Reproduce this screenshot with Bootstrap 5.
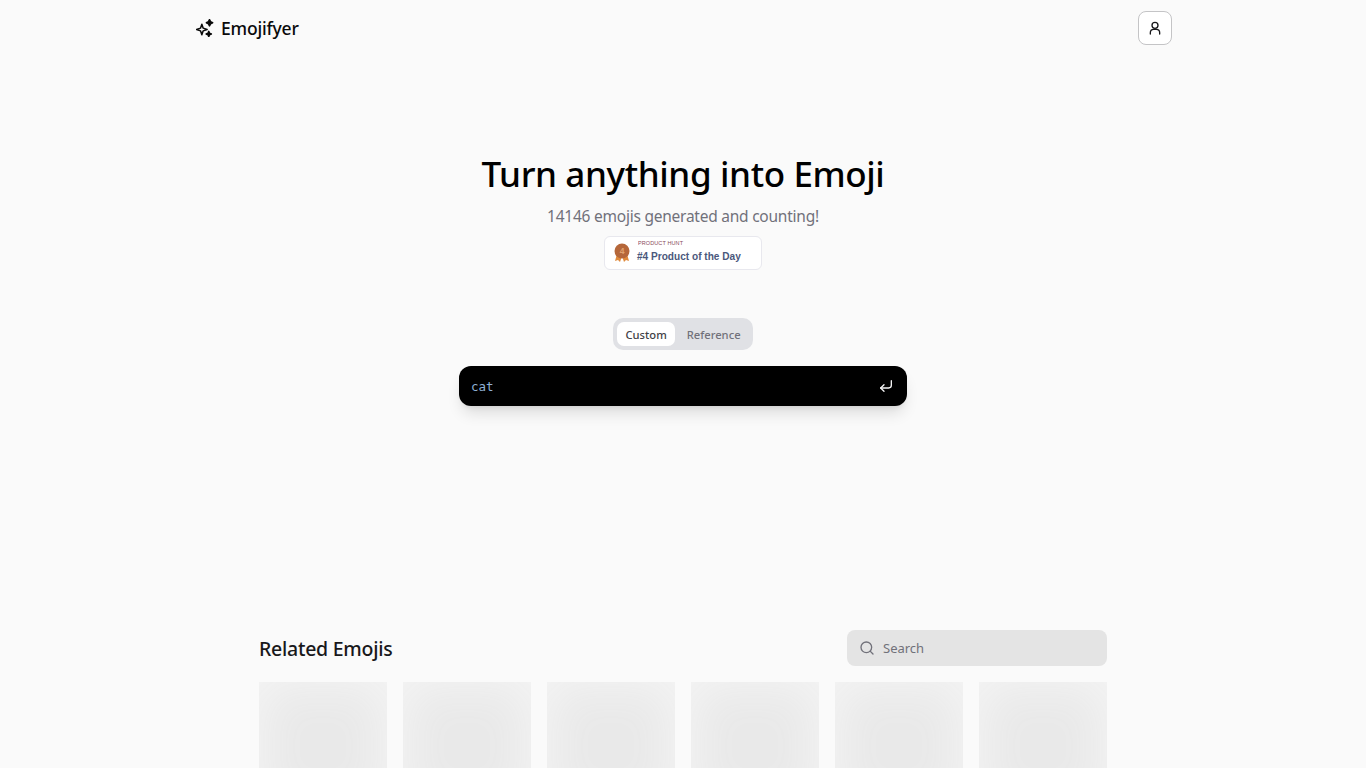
<!DOCTYPE html>
<html lang="en">
<head>
<meta charset="utf-8">
<title>Emojifyer</title>
<link rel="stylesheet" href="https://cdn.jsdelivr.net/npm/bootstrap@5.3.0/dist/css/bootstrap.min.css">
<style>
html,body{height:768px;overflow:hidden}
body{background:#fafafa;font-family:"Noto Sans",sans-serif;color:#000}
.top-bar{width:976px;height:56px;margin-left:196px;padding:11px 0}
.brand-name{font-size:17.5px;font-weight:500;line-height:34px;color:#0a0a0a;letter-spacing:-.2px;margin-left:-1px}
.user-btn{width:34px;height:34px;border:1px solid #c4c4c6;border-radius:8px;background:#fff}
.hero{padding-top:98px}
.hero-title{font-size:35px;font-weight:500;line-height:40px;margin:0;letter-spacing:-.375px}
.hero-sub{font-size:15.5px;line-height:24px;color:#71717a;margin:10px 0 0;letter-spacing:-.24px}
.ph-badge{width:158px;height:34px;margin-top:8px;background:#fff;border:1px solid #e8e8ee;border-radius:6px;padding-left:9px}
.ph-clip{height:5px;overflow:hidden;margin-top:-1px}
.ph-small{font:500 5.500px/6px "Liberation Sans",sans-serif;color:#8a4a5a;margin-top:-1px;letter-spacing:.1px}
.ph-big{font:700 10.1px/14px "Liberation Sans",sans-serif;color:#4b587c;margin-top:4px;margin-left:-1px}
.seg{margin-top:48px;width:140px;height:32px;background:#e0e1e5;border-radius:10px;padding:4px}
.seg-item{font-size:11.2px;font-weight:500;line-height:25px;height:24px;border-radius:7px;padding:0 8.500px;color:#71717a}
.seg-on{background:#fff;color:#3f3f46;margin-right:3px}
.prompt{margin-top:16px;width:448px;height:40px;background:#000;border-radius:12px;padding:0 13px 0 12px;box-shadow:0 10px 15px -3px rgba(0,0,0,.12),0 4px 6px -4px rgba(0,0,0,.12)}
.prompt-text{font:12.5px/42px "DejaVu Sans Mono",monospace;color:#8fb0d4;height:40px}
.related{width:848px;margin-top:224px}
.related-title{font-size:19.5px;font-weight:500;line-height:26px;padding-top:2px;margin:0;color:#18181b;letter-spacing:-.25px}
.search-box{width:260px;height:36px;background:#e4e4e4;border-radius:8px;padding-left:12px;color:#71717a;font-size:13px}
.search-word{padding-top:2px}
.tile-row{margin-top:16px;height:86px;overflow:hidden}
.tile{width:128px;height:128px;flex:none;background:#e9e9e9;box-shadow:inset 0 0 40px 8px #f3f3f3}
</style>
</head>
<body>
<header class="top-bar d-flex justify-content-between align-items-center">
  <div class="d-flex align-items-center gap-2">
    <svg width="18" height="18" viewBox="0 0 24 24" fill="none" stroke="#0a0a0a" stroke-width="2" stroke-linejoin="round" stroke-linecap="round"><path d="M7.800 7 9.600 12.200 14.800 14 9.600 15.800 7.800 21 6 15.800 .8 14 6 12.200z"/><path d="M18 .8 19.400 3.600 22.200 5 19.400 6.400 18 9.200 16.600 6.400 13.800 5 16.600 3.600z" fill="#0a0a0a"/><path d="M17 16.500 18 19 20.500 20 18 21 17 23.500 16 21 13.500 20 16 19z" fill="#0a0a0a"/></svg>
    <span class="brand-name">Emojifyer</span>
  </div>
  <div class="user-btn d-flex align-items-center justify-content-center">
    <svg width="16" height="16" viewBox="0 0 24 24" fill="none" stroke="#18181b" stroke-width="2" stroke-linecap="round"><circle cx="12" cy="8" r="4.500"/><path d="M5 21v-2a5 5 0 0 1 5-5h4a5 5 0 0 1 5 5v2"/></svg>
  </div>
</header>
<main class="hero d-flex flex-column align-items-center text-center">
  <h1 class="hero-title">Turn anything into Emoji</h1>
  <p class="hero-sub">14146 emojis generated and counting!</p>
  <div class="ph-badge d-flex align-items-center gap-2 text-start">
    <svg width="16" height="20" viewBox="0 0 16 20"><path d="M3 11 1 18l3-1 2 2 2-6zM13 11l2 7-3-1-2 2-2-6z" fill="#e08a3c"/><circle cx="8" cy="8" r="7.500" fill="#b5673a"/><text x="8" y="11" text-anchor="middle" font-size="8.500" font-weight="700" font-family="Liberation Sans" fill="#e3a36f">4</text></svg>
    <div><div class="ph-clip"><div class="ph-small">PRODUCT HUNT</div></div><div class="ph-big">#4 Product of the Day</div></div>
  </div>
  <div class="seg d-flex">
    <div class="seg-item seg-on">Custom</div>
    <div class="seg-item">Reference</div>
  </div>
  <div class="prompt d-flex align-items-center justify-content-between">
    <span class="prompt-text">cat</span>
    <svg width="16" height="16" viewBox="0 0 24 24" fill="none" stroke="#f4f4f5" stroke-width="2" stroke-linecap="round" stroke-linejoin="round"><path d="M9 10 4 15l5 5"/><path d="M20 4v7a4 4 0 0 1-4 4H4"/></svg>
  </div>
  <section class="related">
    <div class="d-flex justify-content-between align-items-center">
      <h2 class="related-title">Related Emojis</h2>
      <div class="search-box d-flex align-items-center gap-2">
        <svg width="16" height="16" viewBox="0 0 24 24" fill="none" stroke="#71717a" stroke-width="2" stroke-linecap="round"><circle cx="11" cy="11" r="8"/><path d="m21 21-4.300-4.300"/></svg>
        <span class="search-word">Search</span>
      </div>
    </div>
    <div class="tile-row d-flex gap-3">
      <div class="tile"></div><div class="tile"></div><div class="tile"></div><div class="tile"></div><div class="tile"></div><div class="tile"></div>
    </div>
  </section>
</main>
</body>
</html>
